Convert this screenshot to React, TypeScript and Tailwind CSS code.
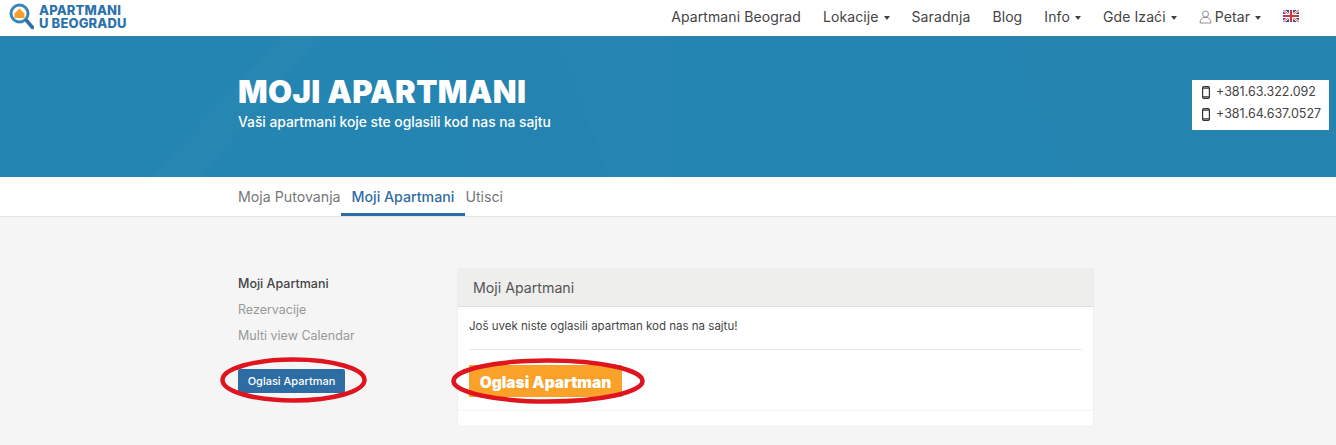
const navItems = [
  { label: 'Apartmani Beograd' },
  { label: 'Lokacije', caret: true },
  { label: 'Saradnja' },
  { label: 'Blog' },
  { label: 'Info', caret: true },
  { label: 'Gde Izaći', caret: true },
];

function Caret() {
  return <span className="ml-[5px] inline-block h-0 w-0 border-x-[3.5px] border-t-[4px] border-x-transparent border-t-[#444] align-middle" />;
}

function Logo() {
  return (
    <div className="flex items-start pl-[8px] pt-[3px]">
      <svg width="26" height="28" viewBox="0 0 26 28">
        <circle cx="11.500" cy="10.500" r="8.500" fill="#fff" stroke="#3a86b8" strokeWidth="3" />
        <path d="M6.500 10.500 11.500 5.500l5 5V15h-10z" fill="#f5a02a" />
        <path d="M18.500 17.500l6 7" stroke="#2f6fa8" strokeWidth="3.500" strokeLinecap="round" />
      </svg>
      <div className="ml-[5px] pt-[1px] text-[13px] font-extrabold leading-[13px] tracking-[0.15px] text-[#2c73ac]">
        <div>APARTMANI</div>
        <div>U BEOGRADU</div>
      </div>
    </div>
  );
}

function Flag() {
  return (
    <svg width="16" height="12" viewBox="0 0 16 12">
      <rect width="16" height="12" fill="#3b4a86" />
      <path d="M0 0l16 12M16 0L0 12" stroke="#fff" strokeWidth="2.400" />
      <path d="M0 0l16 12M16 0L0 12" stroke="#c8373f" strokeWidth="0.800" />
      <path d="M8 0v12M0 6h16" stroke="#fff" strokeWidth="4" />
      <path d="M8 0v12M0 6h16" stroke="#c8373f" strokeWidth="2.200" />
    </svg>
  );
}

function Phone() {
  return (
    <svg width="8" height="13" viewBox="0 0 8 13" className="shrink-0">
      <rect x="0.600" y="0.600" width="6.800" height="11.800" rx="1.200" fill="none" stroke="#333" strokeWidth="1.200" />
      <path d="M1 2.200h6M1 10.800h6" stroke="#333" strokeWidth="1.200" />
    </svg>
  );
}

// faint building lines behind the hero
function HeroTexture() {
  return (
    <svg width="1336" height="141" viewBox="0 0 1336 141" className="pointer-events-none absolute left-0 top-0">
      <path d="M150 141 280 0h40L200 141z" fill="#fff" opacity="0.01" />
      <path d="M440 0h110l60 141H470z" fill="#000" opacity="0.008" />
      <path d="M560 0h108v141H610z" fill="#fff" opacity="0.008" />
      <path d="M1010 0h326v141h-270z" fill="#000" opacity="0.012" />
      <path d="M1120 0h60l60 141h-60z" fill="#fff" opacity="0.008" />
    </svg>
  );
}

function RedEllipse({ className, w, h }: { className: string; w: number; h: number }) {
  return (
    <svg width={w} height={h} viewBox={`0 0 ${w} ${h}`} className={`pointer-events-none absolute ${className}`}>
      <ellipse cx={w / 2} cy={h / 2} rx={w / 2 - 2.500} ry={h / 2 - 2.500} fill="none" stroke="#e0141f" strokeWidth="4.500" />
    </svg>
  );
}

export default function App() {
  return (
    <div className="h-[445px] w-[1336px] overflow-hidden bg-[#f5f5f5] font-['Inter',sans-serif] text-[#444]">
      <header className="flex h-[36px] items-start justify-between bg-white">
        <Logo />
        <nav className="mr-[37px] flex h-[32px] items-center gap-[22px] text-[14px] tracking-[0.1px] text-[#444]">
          {navItems.map((item) => (
            <span key={item.label} className="whitespace-nowrap">
              {item.label}
              {item.caret && <Caret />}
            </span>
          ))}
          <span className="whitespace-nowrap">
            <svg width="13" height="14" viewBox="0 0 13 14" className="mr-[3px] inline-block align-[-2px]">
              <circle cx="6.500" cy="4" r="3" fill="none" stroke="#777" strokeWidth="0.800" />
              <path d="M1 13c0-3.500 2-5 3.500-5.500h4C10 8 12 9.500 12 13z" fill="none" stroke="#777" strokeWidth="0.800" />
            </svg>
            Petar
            <Caret />
          </span>
          <Flag />
        </nav>
      </header>

      <section className="relative flex h-[141px] border-t border-[#3a7ea6] bg-[#2585b2] pl-[238px] pt-[36px] text-white">
        <HeroTexture />
        <div className="relative">
          <h1 className="text-[31px] font-black leading-[38px] tracking-[0.37px]">MOJI APARTMANI</h1>
          <p className="mt-[2px] text-[13.800px] font-medium leading-[18px]">Vaši apartmani koje ste oglasili kod nas na sajtu</p>
        </div>
        <div className="absolute right-[7px] top-[43px] h-[50px] w-[137px] bg-white pl-[10px] pt-[1px] text-[12.500px] leading-[22px] text-[#444]">
          <div className="flex items-center gap-[6px]"><Phone />+381.63.322.092</div>
          <div className="flex items-center gap-[6px]"><Phone />+381.64.637.0527</div>
        </div>
      </section>

      <div className="flex h-[40px] items-stretch border-b border-[#e4e4e4] bg-white pl-[238px] text-[14.200px] text-[#777]">
        <span className="flex items-center pt-[1px]">Moja Putovanja</span>
        <span className="flex items-center border-b-[3px] border-[#2e6da4] px-[11px] pt-[4px] font-medium text-[#2e6da4]">Moji Apartmani</span>
        <span className="flex items-center pt-[1px]">Utisci</span>
      </div>

      <main className="flex pl-[238px] pt-[51px]">
        <aside className="w-[219px]">
          <ul className="pt-[3px] text-[12.500px] leading-[26px] text-[#999]">
            <li className="font-medium text-[#444]">Moji Apartmani</li>
            <li>Rezervacije</li>
            <li>Multi view Calendar</li>
          </ul>
          <div className="relative mt-[18px]">
            <button className="h-[24px] w-[107px] rounded-[2px] bg-[#2e6da4] text-[11px] font-medium text-white">Oglasi Apartman</button>
            <RedEllipse className="left-[-18px] top-[-10px]" w={147} h={46} />
          </div>
        </aside>
        <div className="h-[159px] w-[637px] rounded-[3px] border border-[#eeeeee] bg-white">
          <div className="flex h-[38px] items-center border-b border-[#dfdfdd] bg-[#eeeeec] pl-[15px] text-[14.200px] text-[#555]">Moji Apartmani</div>
          <div className="px-[11px]">
            <p className="pt-[12px] text-[11.500px] leading-[14px] text-[#444]">Još uvek niste oglasili apartman kod nas na sajtu!</p>
            <div className="mt-[16px] border-t border-[#e8e8e8]" />
            <div className="relative mt-[15px]">
              <button className="h-[32px] w-[153px] bg-[#f9a128] pt-[3px] text-[15.500px] font-black text-white">Oglasi Apartman</button>
              <RedEllipse className="left-[-18px] top-[-7px]" w={194} h={46} />
            </div>
            <div className="mx-[-11px] mt-[13px] border-t border-[#f4f4f4]" />
          </div>
        </div>
      </main>
    </div>
  );
}
